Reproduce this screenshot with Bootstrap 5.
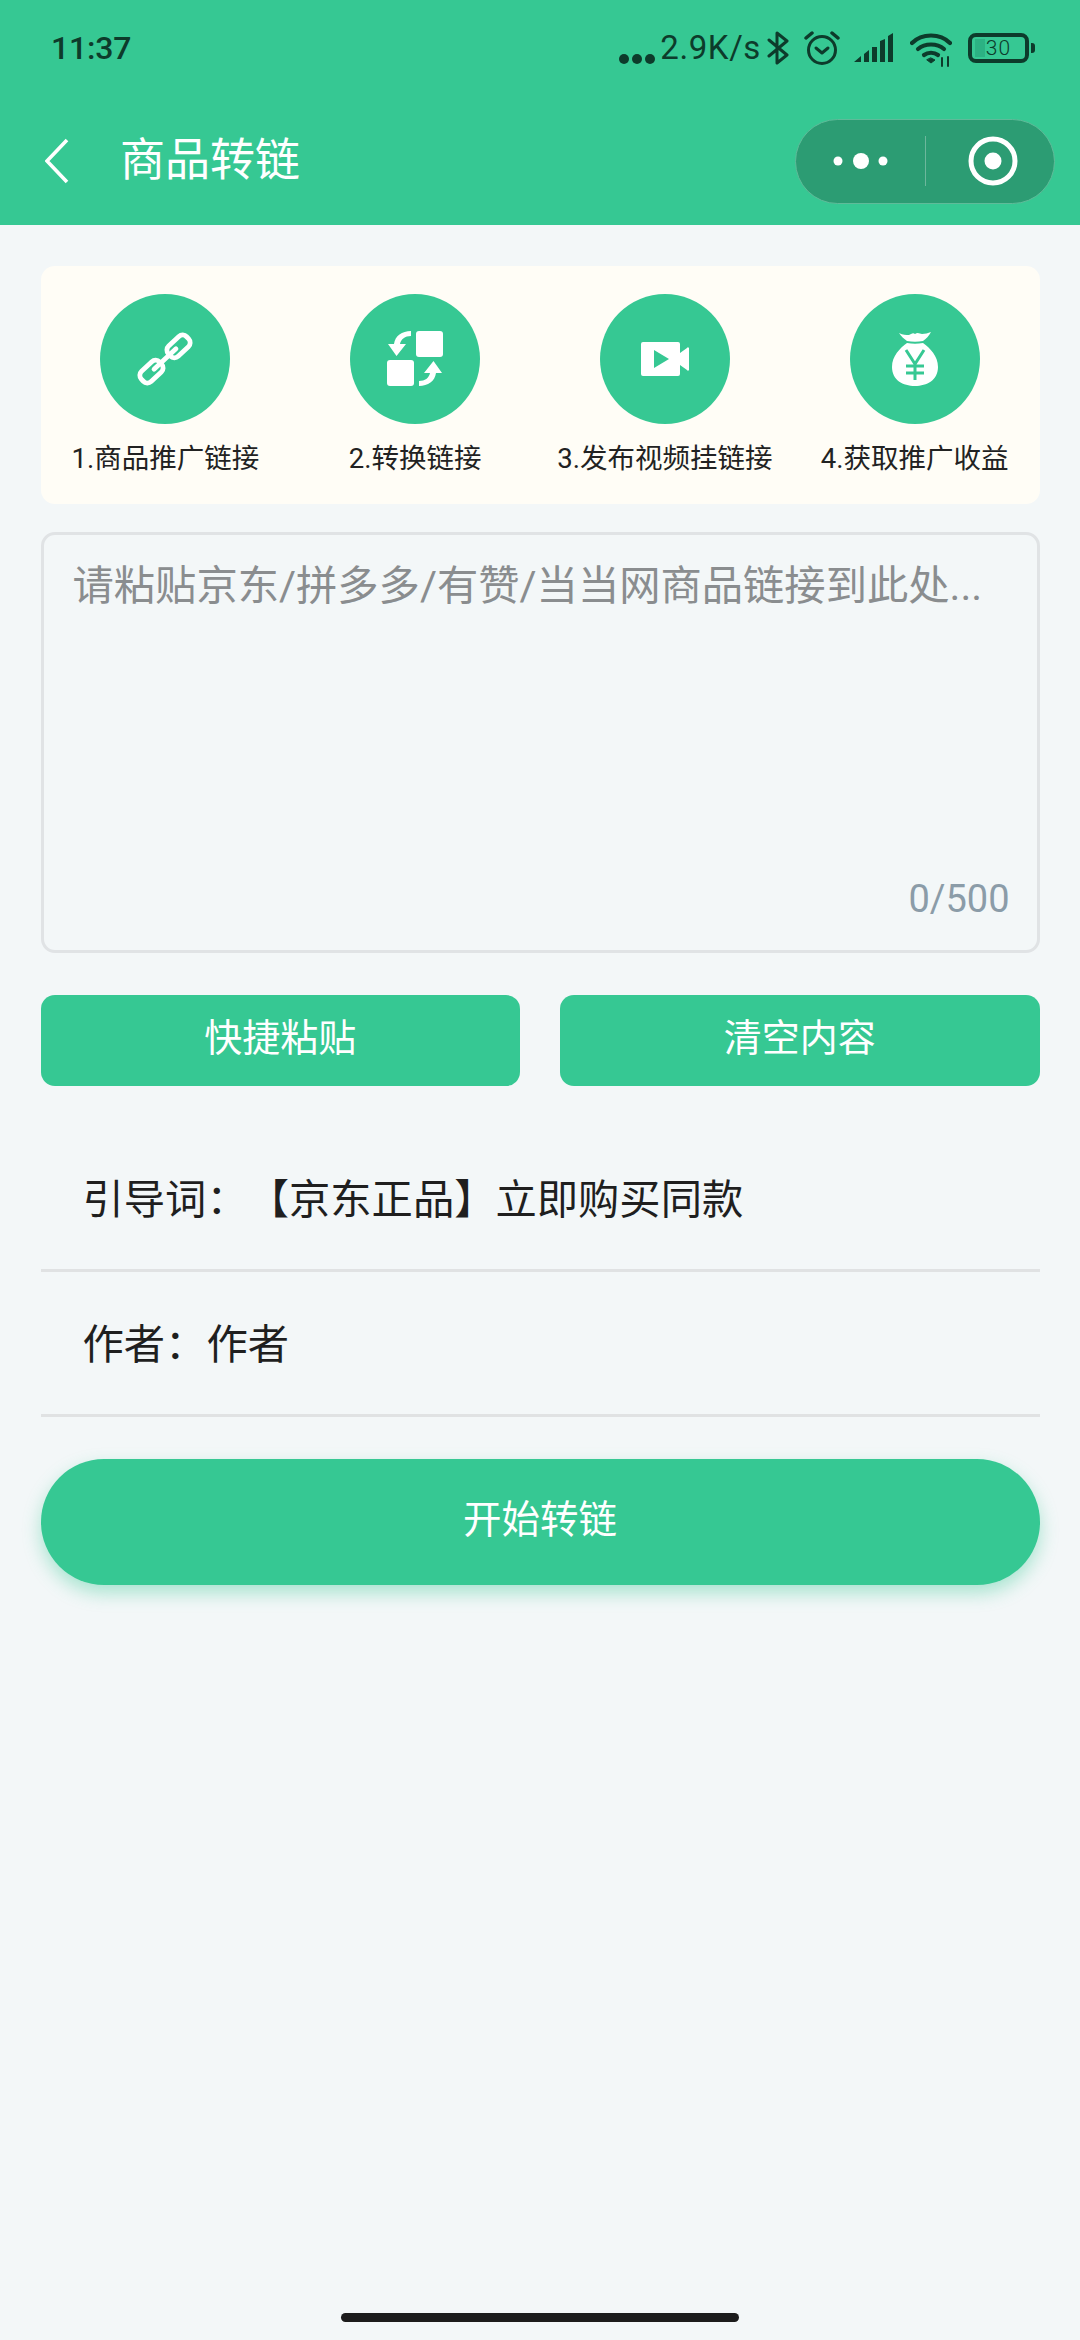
<!DOCTYPE html>
<html lang="zh">
<head>
<meta charset="utf-8">
<title>商品转链</title>
<link href="https://cdn.jsdelivr.net/npm/bootstrap@5.3.0/dist/css/bootstrap.min.css" rel="stylesheet">
<style>
:root{--gr:#36c893;}
body{width:1080px;min-height:2340px;background:#f3f7f8;font-family:Roboto,"Noto Sans CJK SC",sans-serif;color:#1c1c1c;text-spacing-trim:space-all;}
.hdr{background:var(--gr);height:225px;flex:none;}
.stat{height:75px;padding:29px 45px 0 51px;color:#0d3b2b;}
.clock{font-size:32px;font-weight:500;line-height:38px;letter-spacing:-.2px;}
.speed{font-size:33px;line-height:38px;margin:0 6px 0 5px;letter-spacing:.6px;}
.stat svg{display:block;flex:none;}
.bar{height:150px;padding:22px 25px 0 45px;}
.ttl{font-size:45px;line-height:60px;color:#fff;margin-left:51px;}
.capsule{width:260px;height:85px;border-radius:43px;background:#2c9c73;border:1px solid #5fbb99;margin-left:auto;}
.capsule .cap-l{width:130px;height:50px;border-right:1px solid #6db79c;}
.capsule .cap-r{flex:1;padding-left:5px;}
.batt{width:61px;height:30px;border:4px solid #0d3b2b;border-radius:8px;font-size:21px;font-weight:300;line-height:1;letter-spacing:1px;background:linear-gradient(#2cb283,#2cb283) no-repeat 3px 2px/10px 18px;}
.battcap{width:4px;height:10px;margin-left:2px;background:#0d3b2b;border-radius:0 3px 3px 0;}
.wrap{padding:41px 40.5px 0;}
.steps{background:#fffdf6;border-radius:14px;height:238px;padding-top:28px;}
.disc{width:130px;height:130px;background:var(--gr);border-radius:50%;}
.steplbl{font-size:27.5px;line-height:40px;margin-top:15px;white-space:nowrap;color:#222;}
.area-wrap{margin-top:28px;}
.area-wrap .form-control{height:421px;background:#f3f7f8;border:3px solid #e0e3e5;border-radius:14px;padding:23px 29px;font-size:41.3px;line-height:56px;resize:none;box-shadow:none;color:#1c1c1c;}
.area-wrap .form-control::placeholder{color:#8a8d8f;opacity:1;}
.counter{position:absolute;right:30px;bottom:30px;font-size:38px;line-height:48px;color:#8b9ca8;}
.btnrow{margin-top:42px;gap:40px;}
.btn-gr{background:var(--gr);border:0;color:#fff;height:91px;font-size:38px;border-radius:14px;flex:1;line-height:1;padding:0 0 5px;}
.line-row{height:145px;border-bottom:3px solid #e0e2e3;padding:6px 0 0 42px;font-size:41.3px;color:#1f1f1f;}
.first-row{margin-top:41px;}
.go{display:block;width:100%;margin-top:42px;height:126px;border-radius:63px;background:var(--gr);border:0;color:#fff;font-size:38.5px;padding:0 0 4px;box-shadow:0 8px 18px rgba(54,200,147,.4);}
.homebar{width:398px;height:9px;border-radius:5px;background:#1c1c1c;margin:auto auto 18px;flex:none;}
</style>
</head>
<body class="d-flex flex-column">
<header class="hdr">
  <div class="stat d-flex align-items-start">
    <div class="clock">11:37</div>
    <div class="ms-auto d-flex align-items-start">
      <svg width="36" height="38" viewBox="0 0 36 38" fill="#0d3b2b"><circle cx="5" cy="30" r="5"/><circle cx="18" cy="30" r="5"/><circle cx="31" cy="30" r="5"/></svg>
      <div class="speed">2.9K/s</div>
      <svg width="22" height="36" viewBox="0 0 22 36" fill="none" stroke="#0d3b2b" stroke-width="3" stroke-linejoin="round" stroke-linecap="round" style="margin-top:1px"><path d="M2 10 20 25 10 33V3l10 8L2 26"/></svg>
      <svg width="36" height="36" viewBox="0 0 36 36" fill="none" stroke="#0d3b2b" stroke-width="3" style="margin:1px 14px 0 15px"><circle cx="18" cy="20" r="13.5"/><path d="M2 8 8 3M34 8 28 3" stroke-width="3.5" stroke-linecap="round"/><path d="M12 18l6 5 6-5" stroke-linecap="round" stroke-linejoin="round"/></svg>
      <svg width="40" height="30" viewBox="0 0 40 30" fill="#0d3b2b" style="margin:4px 16px 0 0"><path d="M0 29l7-6v6zM10 21l5-4v12h-5zM18 14h5v15h-5zM26 8l5-2v23h-5zM34 3l5-3v29h-5z"/></svg>
      <svg width="42" height="34" viewBox="0 0 42 34" fill="none" stroke="#0d3b2b" stroke-width="4.2" stroke-linecap="round" style="margin:4px 16px 0 0"><path d="M2 10C12 0 30 0 40 10"/><path d="M8 16c7-6 19-6 26 0"/><path d="M14 22c4-3 10-3 14 0"/><path d="M17 27l4 3 4-3-4-2z" fill="#0d3b2b" stroke-width="1"/><path d="M32 25v8M38 24v9" stroke-width="2"/></svg>
      <div class="d-flex align-items-center" style="margin-top:4px">
        <div class="batt d-flex align-items-center justify-content-center">30</div>
        <div class="battcap"></div>
      </div>
    </div>
  </div>
  <div class="bar d-flex align-items-center">
    <svg width="24" height="46" viewBox="0 0 24 46" fill="none" stroke="#fff" stroke-width="3.6"><path d="M22 2 2 23l20 21"/></svg>
    <div class="ttl">商品转链</div>
    <div class="capsule d-flex align-items-center">
      <div class="cap-l d-flex align-items-center justify-content-center">
        <svg width="56" height="18" viewBox="0 0 56 18" fill="#fff"><circle cx="5" cy="9" r="4.5"/><circle cx="28" cy="9" r="8"/><circle cx="50" cy="9" r="4.5"/></svg>
      </div>
      <div class="cap-r d-flex align-items-center justify-content-center">
        <svg width="50" height="50" viewBox="0 0 50 50"><circle cx="25" cy="25" r="22" fill="none" stroke="#fff" stroke-width="5"/><circle cx="25" cy="25" r="8.5" fill="#fff"/></svg>
      </div>
    </div>
  </div>
</header>

<main class="wrap">
  <section class="steps row g-0">
    <div class="col-3 d-flex flex-column align-items-center">
      <div class="disc d-flex align-items-center justify-content-center">
        <svg width="62" height="62" viewBox="0 0 62 62" fill="none" stroke="#fff" stroke-width="4.8" stroke-linecap="round"><g transform="translate(31 31) rotate(-43)"><rect x="6" y="-7" width="25" height="14" rx="5.500"/><rect x="-31" y="-7" width="25" height="14" rx="5.500"/><path d="M-15 0H15"/></g></svg>
      </div>
      <div class="steplbl">1.商品推广链接</div>
    </div>
    <div class="col-3 d-flex flex-column align-items-center">
      <div class="disc d-flex align-items-center justify-content-center">
        <svg width="56" height="56" viewBox="0 0 56 56" fill="#fff"><rect x="29" y="0" width="27" height="26" rx="3"/><rect x="0" y="29" width="27" height="26" rx="3"/><path d="M24 0v5C18 5 14 8 13 13h6l-9.500 12L1 13h6C8 5 15 0 24 0z"/><path d="M32 55v-5c6 0 10-3 11-8h-6l9.500-12L55 42h-6c-1 8-8 13-17 13z"/></svg>
      </div>
      <div class="steplbl">2.转换链接</div>
    </div>
    <div class="col-3 d-flex flex-column align-items-center">
      <div class="disc d-flex align-items-center justify-content-center">
        <svg width="48" height="36" viewBox="0 0 48 36" fill="#fff"><path fill-rule="evenodd" d="M2 1h35a2 2 0 0 1 2 2v30a2 2 0 0 1-2 2H2a2 2 0 0 1-2-2V3a2 2 0 0 1 2-2zM13 9v18l15-9z"/><path d="M39 12l7-5a1 1 0 0 1 2 1v20a1 1 0 0 1-2 1l-7-5z"/></svg>
      </div>
      <div class="steplbl">3.发布视频挂链接</div>
    </div>
    <div class="col-3 d-flex flex-column align-items-center">
      <div class="disc d-flex align-items-center justify-content-center">
        <svg width="46" height="54" viewBox="0 0 46 54" fill="#fff"><path d="M7 1c4 2 7 2 10 2 2-1 4-3 6-1 3-2 5 0 7 0 3 0 6-1 9-2-2 4-5 7-8 9-5 1-11 1-16 0-3-2-6-5-8-8z"/><path d="M15 11c5 1 11 1 16 0 7 5 15 13 15 24 0 13-11 19-23 19S0 48 0 35c0-11 8-19 15-24z"/><path d="M14 18l9 14 9-14M23 32v16M14 34h18M14 41h18" fill="none" stroke="#36c893" stroke-width="3"/></svg>
      </div>
      <div class="steplbl">4.获取推广收益</div>
    </div>
  </section>

  <div class="area-wrap position-relative">
    <textarea class="form-control" placeholder="请粘贴京东/拼多多/有赞/当当网商品链接到此处..."></textarea>
    <div class="counter">0/500</div>
  </div>

  <div class="btnrow d-flex">
    <button type="button" class="btn btn-gr">快捷粘贴</button>
    <button type="button" class="btn btn-gr">清空内容</button>
  </div>

  <div class="line-row first-row d-flex align-items-center">引导词：【京东正品】立即购买同款</div>
  <div class="line-row d-flex align-items-center">作者：作者</div>

  <button type="button" class="btn go">开始转链</button>
</main>
<div class="homebar"></div>
</body>
</html>
